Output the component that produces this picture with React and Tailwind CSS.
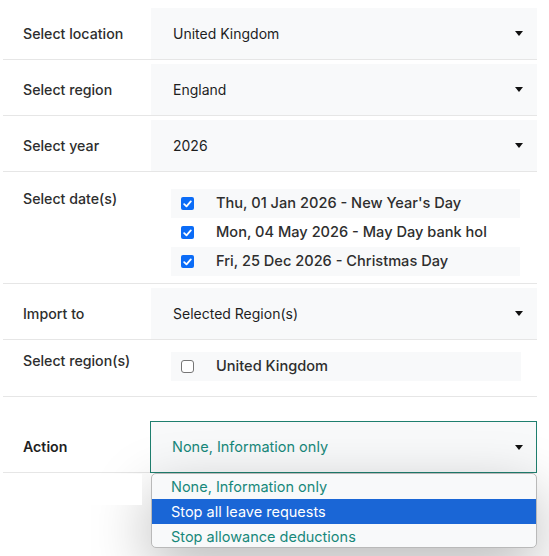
import { useState } from 'react';

const font = { fontFamily: 'Inter, "Noto Sans", sans-serif' };

function Caret() {
  return (
    <svg width="8" height="5" viewBox="0 0 8 5" className="shrink-0">
      <path d="M0 0h8L4 5z" fill="#111" />
    </svg>
  );
}

function Checkbox({ checked }) {
  if (!checked) {
    return <span className="w-[13px] h-[13px] rounded-[3px] border border-[#767676] bg-white shrink-0" />;
  }
  return (
    <span className="w-[13px] h-[13px] rounded-[2px] bg-[#0b6cf7] flex items-center justify-center shrink-0">
      <svg width="9" height="8" viewBox="0 0 9 8">
        <path d="M1.2 4.2L3.5 6.4L7.8 1.4" stroke="#fff" strokeWidth="1.8" fill="none" strokeLinecap="round" strokeLinejoin="round" />
      </svg>
    </span>
  );
}

function SelectRow({ label, value }) {
  return (
    <div className="flex pt-[4px] border-b border-[#e6e6e6]">
      <div className="w-[148px] pl-[20px] flex items-center text-[14.2px] font-medium text-[#2e2e2e]">{label}</div>
      <div className="flex-1 h-[51px] bg-[#f8f9fa] flex items-center justify-between pl-[22px] pr-[14px] text-[14px] text-[#1e1e1e]">
        <span>{value}</span>
        <Caret />
      </div>
    </div>
  );
}

const dates = [
  "Thu, 01 Jan 2026 - New Year's Day",
  'Mon, 04 May 2026 - May Day bank hol',
  'Fri, 25 Dec 2026 - Christmas Day',
];

const actions = ['None, Information only', 'Stop all leave requests', 'Stop allowance deductions'];

export default function App() {
  const [active] = useState(1);

  return (
    <div className="relative h-[556px] overflow-hidden bg-white" style={font}>
      <div className="ml-[3px] w-[534px] pt-[4px]">
        <SelectRow label="Select location" value="United Kingdom" />
        <SelectRow label="Select region" value="England" />
        <SelectRow label="Select year" value="2026" />

        {/* Dates */}
        <div className="flex border-b border-[#e6e6e6] pb-[7px]">
          <div className="w-[148px] pl-[20px] pt-[17px] leading-[20px] text-[14.2px] font-medium text-[#2e2e2e]">Select date(s)</div>
          <div className="pt-[17px] pl-[20px]">
            <div className="w-[349px]">
              {dates.map((d, i) => (
                <div key={d} className={`h-[29px] flex items-center gap-[22px] pl-[10px] ${i % 2 === 0 ? 'bg-[#f8f9fa]' : ''}`}>
                  <Checkbox checked />
                  <span className="text-[14.6px] font-medium text-[#2e2e2e] whitespace-nowrap">{d}</span>
                </div>
              ))}
            </div>
          </div>
        </div>

        <SelectRow label="Import to" value="Selected Region(s)" />

        {/* Regions */}
        <div className="flex border-b border-[#e6e6e6] pb-[15px]">
          <div className="w-[148px] pl-[20px] pt-[11px] leading-[20px] text-[14.2px] font-medium text-[#2e2e2e]">Select region(s)</div>
          <div className="pt-[12px] pl-[20px]">
            <div className="w-[350px] h-[29px] bg-[#f8f9fa] flex items-center gap-[22px] pl-[10px]">
              <Checkbox checked={false} />
              <span className="text-[14.6px] font-medium text-[#2e2e2e]">United Kingdom</span>
            </div>
          </div>
        </div>

        {/* Action */}
        <div className="flex pt-[24px] border-b border-[#e6e6e6]">
          <div className="w-[147px] pl-[20px] flex items-center text-[14.2px] font-semibold text-[#1f1f1f]">Action</div>
          <div className="relative flex-1 -mb-px z-10">
            <div className="h-[52px] bg-[#f8f9fa] border border-[#1f7f6f] flex items-center justify-between pl-[21px] pr-[13px] text-[14.5px] text-[#17887a]">
              <span>None, Information only</span>
              <Caret />
            </div>
            <div className="absolute top-full left-[1px] right-0 h-[75px] bg-[#f8f9fa] border border-[#b9b9b9] rounded-[5px] overflow-hidden shadow-[0_20px_60px_rgba(0,0,0,0.28)]">
              {actions.map((a, i) => (
                <div
                  key={a}
                  className={`h-[25px] flex items-center pl-[19px] text-[14.5px] ${i === active ? 'bg-[#1a66d6] text-white' : 'text-[#17887a]'}`}
                >
                  {a}
                </div>
              ))}
            </div>
          </div>
        </div>
      </div>
      <div className="absolute left-0 top-[474px] w-[142px] h-[31px] bg-white z-20" />
    </div>
  );
}
